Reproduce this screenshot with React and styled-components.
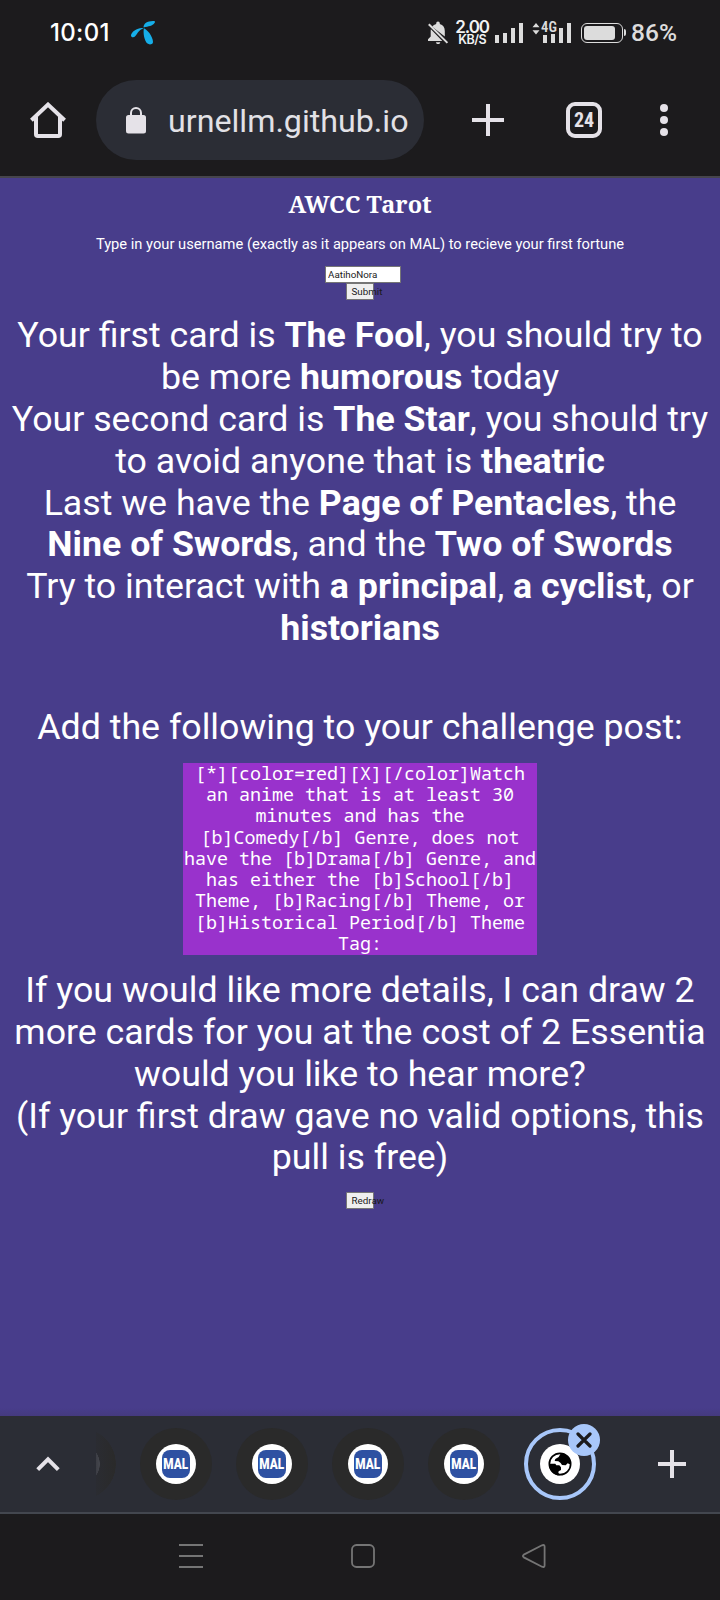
import React, { useState } from 'react';
import styled, { createGlobalStyle, css } from 'styled-components';

const TABS = ['MAL', 'MAL', 'MAL', 'MAL'];

const CODE =
  '[*][color=red][X][/color]Watch an anime that is at least 30 minutes and has the [b]Comedy[/b] Genre, does not have the [b]Drama[/b] Genre, and has either the [b]School[/b] Theme, [b]Racing[/b] Theme, or [b]Historical Period[/b] Theme Tag:';

function App() {
  const [username, setUsername] = useState('AatihoNora');

  return (
    <Screen>
      <GlobalStyle />
      <StatusBar />
      <Toolbar />
      <Page>
        <Title>AWCC Tarot</Title>
        <Intro>
          Type in your username (exactly as it appears on MAL) to recieve your
          first fortune
        </Intro>
        <Form onSubmit={e => e.preventDefault()}>
          <NameInput
            value={username}
            onChange={e => setUsername(e.target.value)}
          />
          <SmallButton>Submit</SmallButton>
        </Form>
        <Fortune>
          Your first card is <b>The Fool</b>, you should try to be more{' '}
          <b>humorous</b> today
          <br />
          Your second card is <b>The Star</b>, you should try to avoid anyone
          that is <b>theatric</b>
          <br />
          Last we have the <b>Page of Pentacles</b>, the <b>Nine of Swords</b>,
          and the <b>Two of Swords</b>
          <br />
          Try to interact with <b>a principal</b>, <b>a cyclist</b>, or{' '}
          <b>historians</b>
        </Fortune>
        <Fortune $gap={57}>Add the following to your challenge post:</Fortune>
        <CodeBox>
          <CodeText>{CODE}</CodeText>
        </CodeBox>
        <Fortune>
          If you would like more details, I can draw 2 more cards for you at the
          cost of 2 Essentia would you like to hear more?
          <br />
          (If your first draw gave no valid options, this pull is free)
        </Fortune>
        <RedrawRow>
          <SmallButton>Redraw</SmallButton>
        </RedrawRow>
      </Page>
      <TabStrip />
      <NavBar />
    </Screen>
  );
}

function StatusBar() {
  return (
    <StatusRow>
      <Clock>10:01</Clock>
      <svg width="26" height="26" viewBox="0 0 26 26" fill="#16aee8">
        <path d="M13.6 7.6C13.2 3.6 18 .6 24.6 1.2c.7.1.5 1 .1 1.6-2.4 3.6-6 3.2-11.1 4.8z" />
        <path d="M13.6 8.2C9.2 6.6 1 11.4 1 15.4c0 2.2 2.9 2.4 4.4.6C7.6 13.3 8.8 9.9 13.6 8.2z" />
        <path d="M13.9 8.2c-1 5 .4 12.6 3.6 15.400 1.600 1.300 4.800 1 5.400-.8.900-3.500-3.500-12-9-14.600z" />
      </svg>
      <StatusIcons>
        <svg width="22" height="24" viewBox="0 0 22 24" fill="#dcdcdc">
          <path d="M5.300 5.700C6.200 4.200 7.600 3.400 9.200 3V2.200a1.800 1.800 0 0 1 3.600 0V3c3.400.8 5 3.600 5 7v5.600z" />
          <path d="M3.900 8.300 15.300 20H1v-1.800L3.700 15.500V10q0-.9.200-1.700z" />
          <path d="M8.900 21.200h4.400c-.2 1.300-1.100 1.900-2.200 1.900s-2-.6-2.200-1.900z" />
          <path d="m1.800 3.300 18.600 18.600" stroke="#dcdcdc" strokeWidth="2" />
        </svg>
        <Speed>
          <SpeedValue>2.00</SpeedValue>
          <SpeedUnit>KB/S</SpeedUnit>
        </Speed>
        <SignalBars />
        <Mobile>
          <svg width="8" height="12" viewBox="0 0 8 12" fill="#dcdcdc">
            <path d="M4 0l3.500 4.200h-7zM4 11.500.5 7.300h7z" />
          </svg>
          <NetworkType>4G</NetworkType>
          <SignalBars />
        </Mobile>
        <Battery>
          <BatteryLevel />
        </Battery>
        <Percent>86%</Percent>
      </StatusIcons>
    </StatusRow>
  );
}

function SignalBars() {
  return (
    <Bars>
      <Bar $height={8} />
      <Bar $height={10} />
      <Bar $height={15} />
      <Bar $height={20} />
    </Bars>
  );
}

function Toolbar() {
  return (
    <ToolbarRow>
      <IconButton $width={96}>
        <svg width="36" height="36" viewBox="0 0 36 36" fill="none">
          <path
            d="M6 15v17.200q0 1.800 1.800 1.800h20.400q1.800 0 1.800-1.800V15M1.400 18.200 18 2.600l16.600 15.600"
            stroke="#e5e2e8"
            strokeWidth="4"
          />
        </svg>
      </IconButton>
      <UrlBar>
        <svg width="20" height="27" viewBox="0 0 20 27" fill="#e5e2e8">
          <rect y="8" width="20" height="18.500" rx="2.500" />
          <path
            d="M5 9V6a5 5 0 0 1 10 0v3"
            fill="none"
            stroke="#e5e2e8"
            strokeWidth="2"
          />
        </svg>
        <Url>urnellm.github.io</Url>
      </UrlBar>
      <IconButton $width={128}>
        <Plus $size={32} />
      </IconButton>
      <IconButton $width={64}>
        <TabCount>24</TabCount>
      </IconButton>
      <IconButton $width={96}>
        <svg width="8" height="32" viewBox="0 0 8 32" fill="#e5e2e8">
          <circle cx="4" cy="4" r="4" />
          <circle cx="4" cy="16" r="4" />
          <circle cx="4" cy="28" r="4" />
        </svg>
      </IconButton>
    </ToolbarRow>
  );
}

function TabStrip() {
  return (
    <Strip>
      <IconButton $width={96}>
        <svg width="24" height="16" viewBox="0 0 24 16" fill="none">
          <path
            d="m1.700 13.600 10.300-10.300 10.300 10.300"
            stroke="#e5e2e8"
            strokeWidth="4"
          />
        </svg>
      </IconButton>
      <HiddenTab />
      <Tabs>
        {TABS.map((name, i) => (
          <Tab key={i}>
            <Favicon>
              <MalLogo>
                <MalText>{name}</MalText>
              </MalLogo>
            </Favicon>
          </Tab>
        ))}
        <Tab $active>
          <Favicon>
            <svg width="24" height="24" viewBox="-36 -36 72 72">
              <circle r="32" fill="#fff" stroke="#000" strokeWidth="5" />
              <path d="M3-33-4-21-14-15-16-9-5-8 2-3 6 3 17 4 23-2 32 2A33 33 0 0 0 3-33z" />
              <path d="M-33-1h19l3 5h9l5 6v8l-7 4-1 5 6 7A33 33 0 0 1-33-1z" />
            </svg>
          </Favicon>
          <CloseBadge>
            <svg width="16" height="16" viewBox="0 0 16 16">
              <path
                d="m2 2 12 12M14 2 2 14"
                stroke="#1c1b1d"
                strokeWidth="3.200"
                strokeLinecap="round"
              />
            </svg>
          </CloseBadge>
        </Tab>
      </Tabs>
      <IconButton $width={96}>
        <Plus $size={28} />
      </IconButton>
    </Strip>
  );
}

function NavBar() {
  return (
    <NavRow>
      <svg width="24" height="24" viewBox="0 0 24 24" stroke="#757575" strokeWidth="2">
        <path d="M0 1h24M0 12h24M0 23h24" />
      </svg>
      <svg width="24" height="24" viewBox="0 0 24 24" fill="none" stroke="#757575" strokeWidth="1.800">
        <rect x="1" y="1" width="22" height="22" rx="4.500" />
      </svg>
      <svg width="24" height="24" viewBox="0 0 24 24" fill="none" stroke="#757575" strokeWidth="1.800">
        <path d="M1.800 10.600 20 1.300q2.600-1 2.600 1.400v18.600q0 2.400-2.600 1.400L1.800 13.400q-1.800-1.400 0-2.800z" />
      </svg>
    </NavRow>
  );
}

const GlobalStyle = createGlobalStyle`
  * {
    box-sizing: border-box;
  }

  body {
    margin: 0;
    background: #1c1b1d;
    font-family: Roboto, 'Liberation Sans', sans-serif;
  }

  svg {
    flex-shrink: 0;
  }
`;

const Screen = styled.div`
  display: flex;
  flex-direction: column;
  width: 720px;
  height: 1600px;
  overflow: hidden;
  background: #1c1b1d;
`;

const StatusRow = styled.header`
  display: flex;
  align-items: center;
  height: 64px;
  padding: 1px 43px 0 50px;
  color: #fff;
`;

const Clock = styled.span`
  width: 80px;
  font: 500 24px/30px Inter, sans-serif;
  letter-spacing: 0.3px;
`;

const StatusIcons = styled.div`
  display: flex;
  align-items: center;
  margin-left: auto;
`;

const Speed = styled.div`
  display: flex;
  flex-direction: column;
  align-items: center;
  width: 38px;
  margin: 0 4px;
  color: #f2f2f2;
  font-family: Inter, sans-serif;
  font-weight: 600;
`;

const SpeedValue = styled.span`
  font-size: 17px;
  line-height: 14px;
  letter-spacing: -1.1px;
`;

const SpeedUnit = styled.span`
  font-size: 12.5px;
  line-height: 11px;
  letter-spacing: -0.5px;
`;

const Bars = styled.div`
  display: flex;
  align-items: flex-end;
  gap: 4px;
  height: 20px;
`;

const Bar = styled.span`
  width: 4px;
  height: ${({ $height }) => $height}px;
  background: #dcdcdc;
`;

const Mobile = styled.div`
  position: relative;
  display: flex;
  align-items: flex-start;
  gap: 3px;
  margin: 0 10px 0 9px;
`;

const NetworkType = styled.span`
  position: absolute;
  top: -2px;
  left: 9px;
  color: #dcdcdc;
  font: 600 14.5px/13px 'Roboto Condensed', Roboto, sans-serif;
  background: #1c1b1d;
`;

const Battery = styled.div`
  position: relative;
  width: 42px;
  height: 20px;
  margin-right: 8px;
  padding: 2px;
  border: 1.5px solid #dcdcdc;
  border-radius: 6px;

  &::after {
    content: '';
    position: absolute;
    top: 5px;
    right: -4px;
    width: 2px;
    height: 7px;
    border-radius: 0 2px 2px 0;
    background: #dcdcdc;
  }
`;

const BatteryLevel = styled.div`
  width: 31px;
  height: 14px;
  border-radius: 3px;
  background: #dcdcdc;
`;

const Percent = styled.span`
  color: #dcdcdc;
  font-size: 24.5px;
  font-weight: 500;
  line-height: 30px;
`;

const ToolbarRow = styled.nav`
  display: flex;
  align-items: center;
  height: 114px;
  border-bottom: 2px solid #46454c;
`;

const IconButton = styled.div`
  display: flex;
  flex-shrink: 0;
  align-items: center;
  justify-content: center;
  width: ${({ $width }) => $width}px;
`;

const UrlBar = styled.div`
  display: flex;
  flex-shrink: 0;
  align-items: center;
  gap: 22px;
  width: 328px;
  height: 80px;
  padding-left: 30px;
  border-radius: 40px;
  background: #2b2d35;
`;

const Url = styled.span`
  padding-top: 2px;
  color: #e2e1e6;
  font-size: 32.2px;
  line-height: 40px;
`;

const Plus = styled.span`
  width: ${({ $size }) => $size}px;
  height: ${({ $size }) => $size}px;
  background: linear-gradient(#e5e2e8, #e5e2e8) center / 100% 4px no-repeat,
    linear-gradient(#e5e2e8, #e5e2e8) center / 4px 100% no-repeat;
`;

const TabCount = styled.div`
  display: flex;
  align-items: center;
  justify-content: center;
  width: 36px;
  height: 36px;
  border: 4px solid #e5e2e8;
  border-radius: 9px;
  color: #e5e2e8;
  font: 700 20px/28px 'Roboto Condensed', Roboto, sans-serif;
`;

const Page = styled.main`
  display: flex;
  flex: 1;
  flex-direction: column;
  align-items: center;
  padding: 10px 8px 0;
  background: linear-gradient(transparent, rgba(60, 50, 100, 0.3)) bottom / 100%
      8px no-repeat,
    #483d8b;
  color: #fff;
  text-align: center;
`;

const Title = styled.h1`
  margin: 0;
  font: 700 23.5px/32px 'Noto Serif', 'DejaVu Serif', serif;
`;

const Intro = styled.p`
  margin: 16px 0 0;
  font-size: 14.7px;
  line-height: 17px;
`;

const Form = styled.form`
  display: flex;
  flex-direction: column;
  align-items: center;
  margin: 13px 0 0;
`;

const NameInput = styled.input`
  width: 76px;
  height: 17px;
  margin-left: 6px;
  padding: 0 2px;
  border: 1px solid #767676;
  background: #fff;
  color: #222;
  font: 9.8px/13px Roboto, sans-serif;
`;

const SmallButton = styled.button`
  width: 28px;
  height: 17px;
  margin-right: 1px;
  padding: 0 0 0 5px;
  border: 1px solid #767676;
  border-radius: 1px;
  background: #efefef;
  color: #1a1a1a;
  font: 9.8px/13px Roboto, sans-serif;
  text-align: left;
  white-space: nowrap;
`;

const Fortune = styled.p`
  align-self: stretch;
  margin: ${({ $gap = 15 }) => $gap}px 0 0;
  font-size: 35.73px;
  line-height: 41.87px;
`;

const CodeBox = styled.div`
  width: 354px;
  height: 192px;
  margin-top: 14px;
  background: #9932cc;
`;

const CodeText = styled.code`
  display: flex;
  font: 18.35px/21.25px 'Noto Sans Mono', 'DejaVu Sans Mono', monospace;
  transform: translateY(-1px);
`;

const RedrawRow = styled.div`
  display: flex;
  margin-top: 13px;
`;

const Strip = styled.nav`
  display: flex;
  align-items: center;
  height: 98px;
  border-bottom: 2px solid #43474f;
  background: #2b2d35;
`;

/* tab scrolled away under the left edge of the strip */
const HiddenTab = styled.div`
  width: 20px;
  height: 72px;
  background: linear-gradient(90deg, #2b2d35bb, transparent),
    radial-gradient(
      circle at -16px 50%,
      #6a6b70 19.5px,
      #2a2a2a 20px 35.5px,
      #2b2d35 36px
    );
`;

const Tabs = styled.div`
  display: flex;
  flex: 1;
  gap: 24px;
  padding-left: 24px;
`;

const Tab = styled.div`
  position: relative;
  display: flex;
  align-items: center;
  justify-content: center;
  width: 72px;
  height: 72px;
  border-radius: 50%;
  background: #2a2a2a;

  ${({ $active }) =>
    $active &&
    css`
      border: 4px solid #a8c7fa;
      background: none;
    `}
`;

const Favicon = styled.div`
  display: flex;
  align-items: center;
  justify-content: center;
  width: 40px;
  height: 40px;
  border-radius: 50%;
  background: #fff;
`;

const MalLogo = styled.div`
  display: flex;
  align-items: center;
  justify-content: center;
  width: 28px;
  height: 28px;
  border-radius: 8px;
  background: #2e51a2;
`;

const MalText = styled.span`
  color: #fff;
  font: 900 14px/28px Roboto, sans-serif;
  transform: scaleX(0.84);
`;

const CloseBadge = styled.div`
  position: absolute;
  top: -8px;
  right: -8px;
  display: flex;
  align-items: center;
  justify-content: center;
  width: 32px;
  height: 32px;
  border-radius: 50%;
  background: #a8c7fa;
`;

const NavRow = styled.footer`
  display: flex;
  align-items: flex-start;
  justify-content: space-between;
  height: 86px;
  padding: 30px 174px 0 179px;
`;

export default App;
